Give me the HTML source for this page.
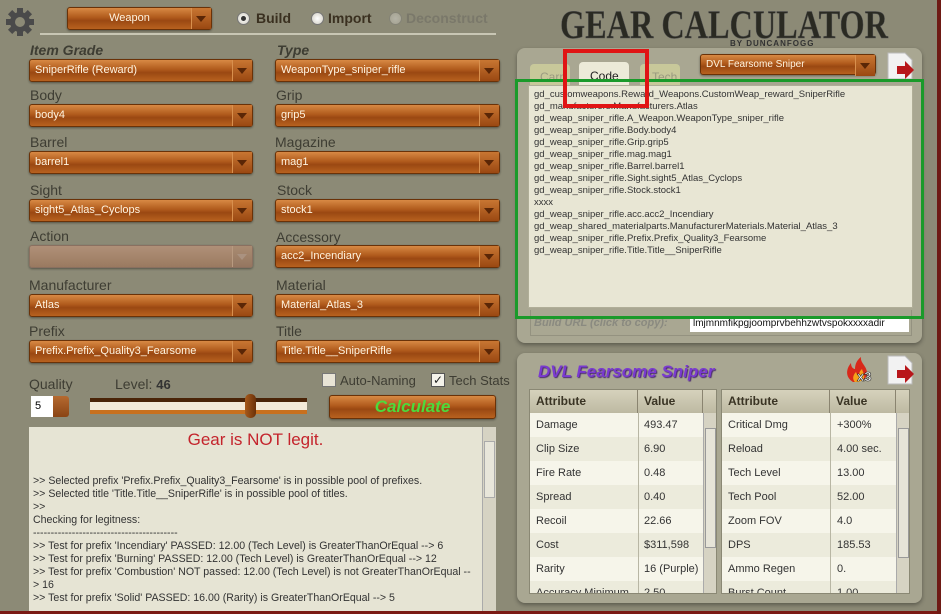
<!DOCTYPE html>
<html><head><meta charset="utf-8"><style>
*{margin:0;padding:0;box-sizing:border-box}
body{width:941px;height:614px;overflow:hidden;background:#8c8a76;font-family:"Liberation Sans",sans-serif;position:relative}
.a{position:absolute}
.lbl{position:absolute;font-size:14px;color:#3e3d33}
.lbl.b{font-weight:bold;font-style:italic}
.dd{position:absolute;height:23px;border-radius:3px;background:linear-gradient(#d88a44,#b05a1c 45%,#9a4812 60%,#b8621f);border:1px solid #6a3208;color:#fff4e0;font-size:11px;line-height:21px;padding-left:5px;box-shadow:0 1px 2px rgba(0,0,0,.4)}
.dd:after{content:"";position:absolute;right:0;top:0;width:19px;height:21px;border-left:1px solid #d8904e;background:linear-gradient(#c87632,#9a4812)}
.dd:before{content:"";position:absolute;right:5px;top:8px;border:5px solid transparent;border-top:6px solid #5a2606;z-index:1}
.dd.dis{background:linear-gradient(#b09078,#9a7a60);border-color:#8a7060}
.dd.dis:after{background:linear-gradient(#aa8c72,#957660);border-left-color:#b89a80}
.dd.dis:before{border-top-color:#aa9280}
.dd.calc:after,.dd.calc:before{display:none}
.radio{position:absolute;width:13px;height:13px;border-radius:50%;background:radial-gradient(#fff,#cfccc0);border:1px solid #777}
.rt{position:absolute;font-size:14px;font-weight:bold;color:#3a3020}
.tbl{position:absolute;background:#f2f0e2;border:1px solid #8a8874;overflow:hidden}
.tbl .hd{position:absolute;top:0;height:23px;background:linear-gradient(#d6d2bc,#bdb9a2);font-weight:bold;font-size:12px;color:#3a3424;line-height:23px;padding-left:6px;border-right:1px solid #8a8470}
.row{position:absolute;height:24px;font-size:11px;color:#333;line-height:24px;padding-left:6px}
.sb{position:absolute;background:#d6d3c3;border-left:1px solid #aaa}
</style></head><body>
<svg class="a" style="left:5px;top:7px" width="30" height="30" viewBox="0 0 30 30"><g fill="#4a4a4a"><circle cx="15" cy="15" r="10"/><rect x="12" y="1" width="6" height="28"/><rect x="1" y="12" width="28" height="6"/><rect x="12" y="1" width="6" height="28" transform="rotate(45 15 15)"/><rect x="12" y="1" width="6" height="28" transform="rotate(-45 15 15)"/></g><circle cx="15" cy="15" r="5" fill="#8c8a76"/></svg>
<div class="dd" style="left:67px;top:7px;width:145px;text-align:center;padding-left:0;padding-right:20px">Weapon</div>
<div class="radio" style="left:237px;top:12px"><div class="a" style="left:3px;top:3px;width:5px;height:5px;border-radius:50%;background:#333"></div></div>
<div class="rt" style="left:256px;top:10px">Build</div>
<div class="radio" style="left:311px;top:12px"></div>
<div class="rt" style="left:328px;top:10px">Import</div>
<div class="radio" style="left:389px;top:12px;opacity:.35"></div>
<div class="rt" style="left:406px;top:10px;color:#7a786a">Deconstruct</div>
<div class="a" style="left:40px;top:33px;width:456px;height:2px;background:#c8c6b4"></div>

<div class="lbl b" style="left:30px;top:42px">Item Grade</div>
<div class="dd" style="left:29px;top:59px;width:224px">SniperRifle (Reward)</div>
<div class="lbl" style="left:30px;top:87px">Body</div>
<div class="dd" style="left:29px;top:104px;width:224px">body4</div>
<div class="lbl" style="left:30px;top:134px">Barrel</div>
<div class="dd" style="left:29px;top:151px;width:224px">barrel1</div>
<div class="lbl" style="left:30px;top:182px">Sight</div>
<div class="dd" style="left:29px;top:199px;width:224px">sight5_Atlas_Cyclops</div>
<div class="lbl" style="left:30px;top:228px">Action</div>
<div class="dd dis" style="left:29px;top:245px;width:224px"></div>
<div class="lbl" style="left:29px;top:277px">Manufacturer</div>
<div class="dd" style="left:29px;top:294px;width:224px">Atlas</div>
<div class="lbl" style="left:29px;top:323px">Prefix</div>
<div class="dd" style="left:29px;top:340px;width:224px">Prefix.Prefix_Quality3_Fearsome</div>

<div class="lbl b" style="left:277px;top:42px">Type</div>
<div class="dd" style="left:275px;top:59px;width:225px">WeaponType_sniper_rifle</div>
<div class="lbl" style="left:276px;top:87px">Grip</div>
<div class="dd" style="left:275px;top:104px;width:225px">grip5</div>
<div class="lbl" style="left:275px;top:134px">Magazine</div>
<div class="dd" style="left:275px;top:151px;width:225px">mag1</div>
<div class="lbl" style="left:277px;top:182px">Stock</div>
<div class="dd" style="left:275px;top:199px;width:225px">stock1</div>
<div class="lbl" style="left:276px;top:229px">Accessory</div>
<div class="dd" style="left:275px;top:245px;width:225px">acc2_Incendiary</div>
<div class="lbl" style="left:276px;top:277px">Material</div>
<div class="dd" style="left:275px;top:294px;width:225px">Material_Atlas_3</div>
<div class="lbl" style="left:276px;top:323px">Title</div>
<div class="dd" style="left:276px;top:340px;width:224px">Title.Title__SniperRifle</div>

<div class="lbl" style="left:29px;top:376px">Quality</div>
<div class="a" style="left:31px;top:396px;width:22px;height:21px;background:#fff;font-size:11px;line-height:21px;padding-left:4px">5</div>
<div class="a" style="left:53px;top:396px;width:16px;height:21px;background:linear-gradient(#b56a30,#8a4414);border-radius:0 3px 3px 0"></div>
<div class="lbl" style="left:115px;top:376px">Level: <b style="color:#333;font-size:13px">46</b></div>
<div class="a" style="left:90px;top:398px;width:217px;height:16px;background:#f3ead8;border-top:4px solid #4a2408;border-bottom:4px solid #c8701e"></div>
<div class="a" style="left:245px;top:394px;width:11px;height:24px;border-radius:5px;background:linear-gradient(90deg,#a65a1c,#6a3008)"></div>
<div class="a" style="left:322px;top:373px;width:14px;height:14px;background:#e8e4d6;border:1px solid #777"></div>
<div class="lbl" style="left:340px;top:373px;font-size:13px">Auto-Naming</div>
<div class="a" style="left:431px;top:373px;width:14px;height:14px;background:#f4f2ea;border:1px solid #555;font-size:12px;line-height:12px;text-align:center;color:#222">✓</div>
<div class="lbl" style="left:449px;top:373px;font-size:13px">Tech Stats</div>
<div class="dd calc" style="left:329px;top:395px;width:167px;height:24px;text-align:center;padding:0;font:italic bold 17px 'Liberation Sans',sans-serif;color:#4cdb3c;line-height:22px">Calculate</div>

<div class="a" style="left:29px;top:427px;width:467px;height:184px;background:#e6e4d4;overflow:hidden">
<div style="text-align:center;color:#c4242c;font-size:17px;margin-top:3px;margin-right:14px">Gear is NOT legit.</div>
<div style="font-size:10.6px;color:#333;line-height:13px;padding:25px 16px 0 4px">&gt;&gt; Selected prefix 'Prefix.Prefix_Quality3_Fearsome' is in possible pool of prefixes.<br>&gt;&gt; Selected title 'Title.Title__SniperRifle' is in possible pool of titles.<br>&gt;&gt;<br>Checking for legitness:<br>-----------------------------------------<br>&gt;&gt; Test for prefix 'Incendiary' PASSED: 12.00 (Tech Level) is GreaterThanOrEqual --&gt; 6<br>&gt;&gt; Test for prefix 'Burning' PASSED: 12.00 (Tech Level) is GreaterThanOrEqual --&gt; 12<br>&gt;&gt; Test for prefix 'Combustion' NOT passed: 12.00 (Tech Level) is not GreaterThanOrEqual --<br>&gt; 16<br>&gt;&gt; Test for prefix 'Solid' PASSED: 16.00 (Rarity) is GreaterThanOrEqual --&gt; 5</div>
<div class="sb" style="left:453px;top:0;width:14px;height:184px"><div class="a" style="left:1px;top:14px;width:11px;height:57px;background:#e8e6da;border:1px solid #aaa"></div></div>
</div>
<div class="a" style="left:0;top:611px;width:941px;height:3px;background:#7a1a14"></div>
<div class="a" style="left:937px;top:0;width:4px;height:614px;background:#6e1a14"></div>

<svg class="a" style="left:555px;top:0" width="340" height="50"><text x="5" y="38" textLength="328" lengthAdjust="spacingAndGlyphs" font-family="Liberation Serif" font-weight="bold" font-size="40" fill="#2a2a22" stroke="#555" stroke-width=".5">GEAR  CALCULATOR</text><text x="175" y="46" font-family="Liberation Sans" font-weight="bold" font-size="8" fill="#333" letter-spacing="1">BY DUNCANFOGG</text></svg>

<div class="a" style="left:517px;top:48px;width:405px;height:295px;border-radius:8px;background:#a9a792;box-shadow:0 2px 4px rgba(0,0,0,.35)"></div>
<div class="a" style="left:530px;top:64px;width:40px;height:22px;background:#c8c89a;border-radius:4px 4px 0 0;font-size:12px;color:#9a9a80;padding:6px 0 0 10px">Carr</div>
<div class="a" style="left:640px;top:64px;width:40px;height:22px;background:#c8c89a;border-radius:4px 4px 0 0;font-size:12px;color:#9a9a80;padding:6px 0 0 12px">Tech</div>
<div class="a" style="left:579px;top:62px;width:50px;height:24px;background:#ecead8;border-radius:4px 4px 0 0;font-size:12px;color:#222;padding:7px 0 0 11px">Code</div>
<div class="dd" style="left:700px;top:54px;width:176px;height:21px;line-height:19px;font-size:10px">DVL Fearsome Sniper</div>
<svg class="a" style="left:886px;top:52px" width="30" height="28"><path d="M2 1h17l7 7v19H2z" fill="#f2f2f2" stroke="#bbb"/><path d="M11 14h8v-5l9 9-9 9v-5h-8z" fill="#b8161a"/></svg>
<div class="a" style="left:528px;top:85px;width:385px;height:223px;background:#e8e6d4;border:1px solid #b0ae98;font-size:9.5px;line-height:12px;color:#333;padding:3px 0 0 5px">gd_customweapons.Reward_Weapons.CustomWeap_reward_SniperRifle<br>gd_manufacturers.Manufacturers.Atlas<br>gd_weap_sniper_rifle.A_Weapon.WeaponType_sniper_rifle<br>gd_weap_sniper_rifle.Body.body4<br>gd_weap_sniper_rifle.Grip.grip5<br>gd_weap_sniper_rifle.mag.mag1<br>gd_weap_sniper_rifle.Barrel.barrel1<br>gd_weap_sniper_rifle.Sight.sight5_Atlas_Cyclops<br>gd_weap_sniper_rifle.Stock.stock1<br>xxxx<br>gd_weap_sniper_rifle.acc.acc2_Incendiary<br>gd_weap_shared_materialparts.ManufacturerMaterials.Material_Atlas_3<br>gd_weap_sniper_rifle.Prefix.Prefix_Quality3_Fearsome<br>gd_weap_sniper_rifle.Title.Title__SniperRifle</div>
<div class="a" style="left:530px;top:310px;width:382px;height:26px;border:1px solid #949280;border-top:none"></div>
<div class="a" style="left:534px;top:317px;font:italic bold 11px 'Liberation Sans',sans-serif;color:#8a8a80">Build URL (click to copy):</div>
<div class="a" style="left:690px;top:316px;width:219px;height:16px;background:#fff;font-size:10px;line-height:16px;padding-left:3px;color:#111;overflow:hidden;white-space:nowrap">lmjmnmfikpgjoomprvbehhzwtvspokxxxxadir</div>
<div class="a" style="left:515px;top:79px;width:409px;height:240px;border:3px solid #1a9a2a"></div>
<div class="a" style="left:563px;top:49px;width:86px;height:59px;border:4px solid #e01414"></div>

<div class="a" style="left:517px;top:353px;width:405px;height:250px;border-radius:8px;background:#a9a792;box-shadow:0 2px 4px rgba(0,0,0,.35)"></div>
<div class="a" style="left:538px;top:362px;font:italic bold 17px 'Liberation Sans',sans-serif;color:#7a3ad0;text-shadow:1px 1px 1px #4a2a70">DVL Fearsome Sniper</div>
<div class="a" style="left:843px;top:357px;width:36px;height:26px"><svg width="36" height="26"><path d="M10 25C2 20 3 12 8 6c0 5 3 6 4 6 0-5 2-9 6-12-1 6 6 9 6 16 0 5-4 9-14 9z" fill="#d8281a"/><path d="M12 25c-3-3-2-7 1-10 1 3 3 3 3 3 0-3 2-5 3-6 1 4 3 6 2 9-1 3-4 4-9 4z" fill="#f6a21a"/><text x="14" y="24" font-family="Liberation Sans" font-weight="bold" font-size="13" fill="#fff" stroke="#222" stroke-width=".6">x3</text></svg></div>
<svg class="a" style="left:886px;top:355px" width="30" height="30"><path d="M2 1h17l7 7v21H2z" fill="#f2f2f2" stroke="#bbb"/><path d="M11 15h8v-5l9 9-9 9v-5h-8z" fill="#b8161a"/></svg>

<div class="tbl" style="left:529px;top:389px;width:188px;height:205px">
<div class="hd" style="left:0;width:108px">Attribute</div><div class="hd" style="left:108px;width:65px">Value</div><div class="hd" style="left:173px;width:14px;border:none"></div>
<div class="row" style="top:23px;left:0;width:173px;background:#f6f5ea">Damage<span class="a" style="left:114px">493.47</span></div>
<div class="row" style="top:47px;left:0;width:173px;background:#ecebdc">Clip Size<span class="a" style="left:114px">6.90</span></div>
<div class="row" style="top:71px;left:0;width:173px;background:#f6f5ea">Fire Rate<span class="a" style="left:114px">0.48</span></div>
<div class="row" style="top:95px;left:0;width:173px;background:#ecebdc">Spread<span class="a" style="left:114px">0.40</span></div>
<div class="row" style="top:119px;left:0;width:173px;background:#f6f5ea">Recoil<span class="a" style="left:114px">22.66</span></div>
<div class="row" style="top:143px;left:0;width:173px;background:#ecebdc">Cost<span class="a" style="left:114px">$311,598</span></div>
<div class="row" style="top:167px;left:0;width:173px;background:#f6f5ea">Rarity<span class="a" style="left:114px">16 (Purple)</span></div>
<div class="row" style="top:191px;left:0;width:173px;background:#ecebdc">Accuracy Minimum<span class="a" style="left:114px">2.50</span></div>
<div class="a" style="left:108px;top:23px;width:1px;height:182px;background:#b8b6a4"></div>
<div class="sb" style="left:173px;top:23px;width:14px;height:182px"><div class="a" style="left:1px;top:15px;width:11px;height:120px;background:#e6e4d8;border:1px solid #999"></div></div>
</div>

<div class="tbl" style="left:721px;top:389px;width:189px;height:205px">
<div class="hd" style="left:0;width:108px">Attribute</div><div class="hd" style="left:108px;width:66px">Value</div><div class="hd" style="left:174px;width:14px;border:none"></div>
<div class="row" style="top:23px;left:0;width:174px;background:#f6f5ea">Critical Dmg<span class="a" style="left:115px">+300%</span></div>
<div class="row" style="top:47px;left:0;width:174px;background:#ecebdc">Reload<span class="a" style="left:115px">4.00 sec.</span></div>
<div class="row" style="top:71px;left:0;width:174px;background:#f6f5ea">Tech Level<span class="a" style="left:115px">13.00</span></div>
<div class="row" style="top:95px;left:0;width:174px;background:#ecebdc">Tech Pool<span class="a" style="left:115px">52.00</span></div>
<div class="row" style="top:119px;left:0;width:174px;background:#f6f5ea">Zoom FOV<span class="a" style="left:115px">4.0</span></div>
<div class="row" style="top:143px;left:0;width:174px;background:#ecebdc">DPS<span class="a" style="left:115px">185.53</span></div>
<div class="row" style="top:167px;left:0;width:174px;background:#f6f5ea">Ammo Regen<span class="a" style="left:115px">0.</span></div>
<div class="row" style="top:191px;left:0;width:174px;background:#ecebdc">Burst Count<span class="a" style="left:115px">1.00</span></div>
<div class="a" style="left:108px;top:23px;width:1px;height:182px;background:#b8b6a4"></div>
<div class="sb" style="left:174px;top:23px;width:14px;height:182px"><div class="a" style="left:1px;top:15px;width:11px;height:130px;background:#e6e4d8;border:1px solid #999"></div></div>
</div>
</body></html>
